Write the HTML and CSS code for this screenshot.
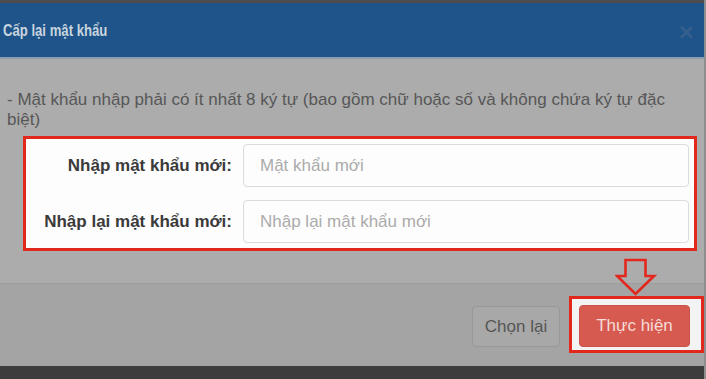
FILE: index.html
```html
<!DOCTYPE html>
<html lang="vi">
<head>
<meta charset="utf-8">
<link rel="stylesheet" href="styles.css">
</head>
<body>
<div class="modal">
  <div class="topstrip"></div>
  <div class="header">
    <span class="title">Cấp lại mật khẩu</span>
    <span class="close">×</span>
  </div>
  <div class="body">
    <p class="note">- Mật khẩu nhập phải có ít nhất 8 ký tự (bao gồm chữ hoặc số và không chứa ký tự đặc biệt)</p>
    <div class="form">
      <div class="row">
        <label class="label">Nhập mật khẩu mới:</label>
        <div class="input">Mật khẩu mới</div>
      </div>
      <div class="row">
        <label class="label">Nhập lại mật khẩu mới:</label>
        <div class="input">Nhập lại mật khẩu mới</div>
      </div>
    </div>
  </div>
  <div class="footer">
    <svg class="arrow" width="42" height="40" viewBox="0 0 42 40">
      <path d="M10.5 2 H30.5 V18 H39 L20.5 36 L2 18 H10.5 Z" fill="none" stroke="#e2281c" stroke-width="2.6" stroke-linejoin="miter"/>
    </svg>
    <button class="btn btn-reset">Chọn lại</button>
    <div class="highlight">
      <button class="btn btn-submit">Thực hiện</button>
    </div>
  </div>
  <div class="bottomstrip"></div>
</div>
</body>
</html>
```
FILE: styles.css
```css
* { box-sizing: border-box; }
html, body { margin: 0; padding: 0; }
body {
  width: 706px;
  height: 379px;
  overflow: hidden;
  background: #3c3c3c;
  font-family: "Liberation Sans", Arial, sans-serif;
}
.modal {
  width: 706px;
  height: 379px;
  display: flex;
  flex-direction: column;
  background: #a9a9a9;
  border-right: 2px solid #8e8e8e;
}
.topstrip {
  flex: none;
  height: 3px;
  background: #4d4d4d;
}
.header {
  flex: none;
  height: 56px;
  background: #1e5489;
  display: flex;
  align-items: center;
  justify-content: space-between;
  padding: 0 10px 0 3px;
  border-bottom: 2px solid #8d9db0;
}
.title {
  display: inline-block;
  color: #c9d4df;
  font-weight: bold;
  font-size: 16px;
  margin-top: 2px;
  transform: scaleX(0.82);
  transform-origin: left center;
}
.close {
  color: #345e8c;
  font-size: 26px;
  font-weight: bold;
  margin-top: 4px;
}
.body {
  flex: none;
  background: #acacac;
  padding: 31px 0 0 0;
  height: 225px;
  border-bottom: 1px solid #9d9d9d;
}
.note {
  margin: 0 8px 0 7px;
  font-size: 17px;
  line-height: 20px;
  color: #575757;
}
.form {
  margin: 6px 7px 0 23px;
  border: 3px solid #e2281c;
  background: #fdfdfd;
  padding: 5px 5px 5px 0;
  display: flex;
  flex-direction: column;
  gap: 13px;
}
.row {
  display: flex;
  align-items: center;
  gap: 11px;
}
.label {
  width: 206px;
  text-align: right;
  font-weight: bold;
  font-size: 17px;
  color: #3a3a3a;
}
.input {
  flex: 1;
  height: 43px;
  border: 1px solid #dcdcdc;
  border-radius: 4px;
  display: flex;
  align-items: center;
  padding-left: 16px;
  font-size: 17px;
  color: #ababab;
}
.footer {
  position: relative;
  flex: 1;
  background: #a4a4a4;
  display: flex;
  justify-content: flex-end;
  align-items: flex-start;
  padding: 12px 0 0 0;
  gap: 9px;
}
.arrow {
  position: absolute;
  left: 615px;
  top: -26px;
}
.btn {
  font-family: "Liberation Sans", Arial, sans-serif;
  font-size: 17px;
  border-radius: 4px;
  cursor: pointer;
}
.btn-reset {
  margin-top: 10px;
  width: 88px;
  height: 41px;
  background: #a8a8a8;
  border: 1px solid #989898;
  color: #555;
}
.highlight {
  border: 3px solid #e2281c;
  background: #f3f3f3;
  padding: 6px 11px 3px 7px;
}
.btn-submit {
  width: 111px;
  height: 42px;
  background: #d65a4f;
  border: 1px solid #c9524a;
  color: #f5dcd8;
  display: block;
}
.bottomstrip {
  flex: none;
  height: 13px;
  background: #3c3c3c;
}
```
